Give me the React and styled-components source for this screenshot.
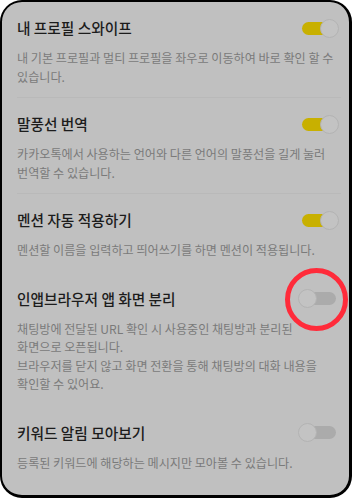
import React from "react"
import styled, { createGlobalStyle } from "styled-components"

const GlobalStyle = createGlobalStyle`
  html, body {
    margin: 0;
    padding: 0;
    background: #ffffff;
  }
  body {
    font-family: "Noto Sans CJK KR", "Noto Sans", sans-serif;
  }
`

const Frame = styled.div`
  box-sizing: border-box;
  width: 352px;
  height: 498px;
  border: 2px solid #000;
  border-right-width: 3px;
  border-bottom-width: 3px;
  border-radius: 22px;
  background: #c0c0c0;
  overflow: hidden;
`

const Section = styled.div`
  padding: 16px 13px 11px 15px;
`

// groups are split by a faint rule, items inside a group only by space
const Divider = styled.div`
  height: ${p => (p.$line ? "1px" : "2px")};
  margin: 0 8px 0 15px;
  background: ${p => (p.$line ? "#b9b9b9" : "transparent")};
`

const TitleRow = styled.div`
  display: flex;
  align-items: center;
  justify-content: space-between;
  height: 20px;
`

const Title = styled.div`
  font-size: 14.7px;
  font-weight: 500;
  line-height: 20px;
  color: #1c1c1c;
`

const Desc = styled.div`
  margin-top: 11px;
  font-size: 12.1px;
  line-height: 18.5px;
  color: #7a7a7a;
  white-space: pre-line;
  word-break: keep-all;
`

const SwitchWrap = styled.div`
  position: relative;
  width: 41px;
  height: 19px;
  margin-right: -3px;
  flex-shrink: 0;
`

const Track = styled.div`
  position: absolute;
  left: 4px;
  right: 3px;
  top: 3px;
  height: 13px;
  border-radius: 7px;
  background: ${p => (p.$on ? "#c8b000" : "#ababab")};
`

const Knob = styled.div`
  position: absolute;
  top: 0;
  ${p => (p.$on ? "right: 0;" : "left: 0;")}
  box-sizing: border-box;
  width: 19px;
  height: 19px;
  border-radius: 50%;
  background: #c3c3c3;
  border: 1px solid #b3b3b3;
`

const Highlight = styled.div`
  position: absolute;
  left: 50%;
  top: 50%;
  width: 63px;
  height: 63px;
  box-sizing: border-box;
  margin-left: -34px;
  margin-top: -31px;
  border: 5px solid #ff2b3a;
  border-radius: 50%;
`

const Switch = ({ on, marked }) => (
  <SwitchWrap>
    <Track $on={on} />
    <Knob $on={on} />
    {marked && <Highlight />}
  </SwitchWrap>
)

const items = [
  {
    title: "내 프로필 스와이프",
    desc: "내 기본 프로필과 멀티 프로필을 좌우로 이동하여 바로 확인 할 수 있습니다.",
    on: true,
  },
  {
    title: "말풍선 번역",
    desc: "카카오톡에서 사용하는 언어와 다른 언어의 말풍선을 길게 눌러 번역할 수 있습니다.",
    on: true,
    line: true,
  },
  {
    title: "멘션 자동 적용하기",
    desc: "멘션할 이름을 입력하고 띄어쓰기를 하면 멘션이 적용됩니다.",
    on: true,
    line: true,
  },
  {
    title: "인앱브라우저 앱 화면 분리",
    desc: "채팅방에 전달된 URL 확인 시 사용중인 채팅방과 분리된 화면으로 오픈됩니다.\n브라우저를 닫지 않고 화면 전환을 통해 채팅방의 대화 내용을 확인할 수 있어요.",
    on: false,
    marked: true,
  },
  {
    title: "키워드 알림 모아보기",
    desc: "등록된 키워드에 해당하는 메시지만 모아볼 수 있습니다.",
    on: false,
  },
]

export default function App() {
  return (
    <>
      <GlobalStyle />
      <Frame>
        {items.map((item, i) => (
          <React.Fragment key={item.title}>
            {i > 0 && <Divider $line={item.line} />}
            <Section>
              <TitleRow>
                <Title>{item.title}</Title>
                <Switch on={item.on} marked={item.marked} />
              </TitleRow>
              <Desc>{item.desc}</Desc>
            </Section>
          </React.Fragment>
        ))}
      </Frame>
    </>
  )
}
